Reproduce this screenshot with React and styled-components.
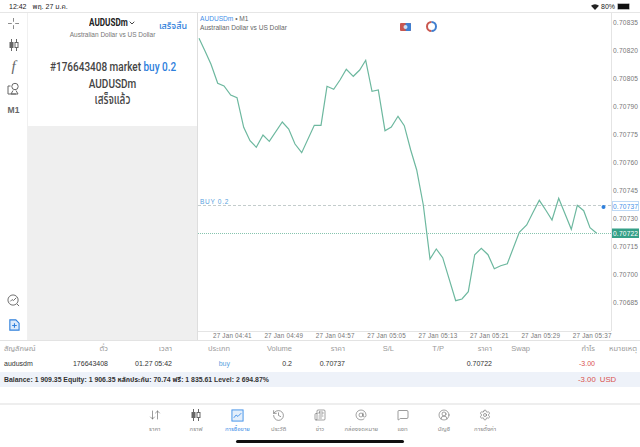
import React from "react";
import styled, { createGlobalStyle } from "styled-components";
import {
  ArrowDownUp,
  ChevronDown,
  CircleUserRound,
  AtSign,
  History,
  MessageSquare,
  Newspaper,
  Settings,
} from "lucide-react";

const THAI = `"Noto Sans Thai", "Noto Sans Thai UI", "Noto Sans", "DejaVu Sans"`;

const linePoints = [
  [199, 38.3], [205, 51], [211, 64.3], [217.7, 83.3], [224, 86], [230.7, 95], [237, 97.7],
  [243.7, 127.3], [250, 140.7], [256.3, 147.3], [263, 135], [269.3, 141.3], [282.3, 122],
  [288.7, 129], [295, 144], [301.7, 152.7], [314.3, 125.3], [321, 125.3], [327, 86.3],
  [333.7, 89.3], [340, 80], [346.3, 69.3], [353.3, 76.3], [359.7, 70], [365.7, 60.3],
  [372, 91.3], [378.3, 90], [385, 130.7], [391.3, 127], [398, 116.3], [404.3, 125.7],
  [410.7, 150], [416.7, 170], [423.3, 205], [430, 259], [436.3, 249], [442.7, 257.7],
  [455.7, 300.7], [462, 299], [468.3, 291.7], [474.7, 254.7], [481.3, 248.3], [488, 254.7],
  [494.3, 268.7], [500.7, 265.7], [507.3, 263.7], [519.3, 232.3], [526.7, 225], [532.7, 213],
  [539.3, 200.3], [545.7, 210], [552, 220], [558.7, 198.3], [571.3, 229.3], [577.3, 205.3],
  [583.7, 210.7], [590, 227.7], [596.7, 233.3],
];

const prices = [
  "0.70835", "0.70820", "0.70805", "0.70790", "0.70775", "0.70760",
  "0.70745", "0.70730", "0.70715", "0.70700", "0.70685",
];
const times = ["04:41", "04:49", "04:57", "05:05", "05:13", "05:21", "05:29", "05:37"];

const headers = [
  "สัญลักษณ์", "ตั๋ว", "เวลา", "ประเภท", "Volume", "ราคา",
  "S/L", "T/P", "ราคา", "Swap", "กำไร", "หมายเหตุ",
];
const values = [
  "audusdm", "176643408", "01.27 05:42", "buy", "0.2", "0.70737",
  "", "", "0.70722", "", "-3.00", "",
];

const GlobalStyle = createGlobalStyle`
  html, body {
    margin: 0;
    padding: 0;
    background: #fff;
  }
  body {
    font-family: "Liberation Sans", ${THAI}, sans-serif;
    overflow: hidden;
  }
`;

const Page = styled.div`
  width: 640px;
  height: 447px;
  display: flex;
  flex-direction: column;
  overflow: hidden;
`;

const StatusBar = styled.div`
  height: 13px;
  flex: none;
  display: flex;
  align-items: center;
  padding: 1px 9px 0 9px;
  box-sizing: border-box;
  font-size: 7px;
  color: #222;
  border-bottom: 1px solid #e6e6e6;
`;

const StatusDate = styled.span`
  margin-left: 6px;
  flex: 1;
`;

const BatteryLevel = styled.span`
  margin-left: 2px;
`;

const Battery = styled.span`
  display: inline-block;
  width: 11px;
  height: 5px;
  margin-left: 2px;
  margin-right: 1px;
  background: #111;
  border-radius: 1.5px;
  border: 1px solid #bbb;
`;

const Main = styled.div`
  height: 327px;
  flex: none;
  display: flex;
`;

const Toolbar = styled.div`
  width: 27px;
  flex: none;
  display: flex;
  flex-direction: column;
  align-items: center;
  box-sizing: border-box;
  color: #666;
`;

const ToolSlot = styled.div`
  height: 21.5px;
  width: 100%;
  display: flex;
  align-items: center;
  justify-content: center;
  color: ${(p) => p.$color || "#666"};
  font-size: ${(p) => p.$size || 8}px;
  font-weight: ${(p) => p.$weight || 400};
`;

const FuncGlyph = styled.span`
  font-family: "Liberation Serif", serif;
  font-style: italic;
  font-size: 15px;
  color: #666;
`;

const ToolSpacer = styled.div`
  flex: 1;
`;

const ToolBottom = styled.div`
  width: 100%;
  display: flex;
  flex-direction: column;
  gap: 3px;
  padding-bottom: 4px;
`;

const OrderPanel = styled.div`
  width: 171px;
  flex: none;
  display: flex;
  flex-direction: column;
  background: #efefef;
  border-left: 1px solid #f0f0f0;
  border-right: 1px solid #dedede;
  box-sizing: border-box;
`;

const OrderCard = styled.div`
  height: 113px;
  flex: none;
  background: #fff;
  display: flex;
  flex-direction: column;
  position: relative;
`;

const SymbolHead = styled.div`
  display: flex;
  flex-direction: column;
  align-items: center;
  padding-top: 3px;
`;

const SymbolName = styled.div`
  display: flex;
  align-items: center;
  gap: 1px;
  height: 13px;
  color: #222;
`;

const SymbolText = styled.span`
  display: inline-block;
  width: 38px;
  font-family: "Roboto", sans-serif;
  font-weight: 700;
  font-size: 11px;
  line-height: 13px;
  white-space: nowrap;
  transform: scaleX(0.74);
  transform-origin: left center;
`;

const SymbolDesc = styled.div`
  font-size: 6.5px;
  line-height: 9px;
  color: #777;
  margin-top: 1px;
`;

const DoneButton = styled.span`
  position: absolute;
  right: 10px;
  top: 6px;
  font-size: 9px;
  font-weight: 500;
  color: #2f80dc;
`;

const Message = styled.div`
  margin-top: 19px;
  text-align: center;
  white-space: nowrap;
  font-family: "Roboto", ${THAI}, sans-serif;
  font-size: 13.5px;
  line-height: 16.5px;
  color: #444;
  font-weight: 500;
  transform: scaleX(0.74);
`;

const BuyText = styled.span`
  color: #2f80dc;
`;

const ChartArea = styled.div`
  flex: 1;
  position: relative;
  min-width: 0;
`;

const ChartSvg = styled.svg`
  display: block;
  width: 100%;
  height: 100%;
`;

const Legend = styled.div`
  position: absolute;
  left: 2px;
  top: 2px;
  font-size: 6.6px;
  line-height: 8.5px;
  color: #666;
`;

const LegendSymbol = styled.span`
  color: #3f8fe8;
`;

const QuickIcons = styled.div`
  position: absolute;
  left: 202px;
  top: 8px;
  display: flex;
  gap: 15px;
  align-items: center;
`;

const Table = styled.div`
  flex: none;
  border-top: 1px solid #e3e3e3;
`;

const TableRow = styled.div`
  display: grid;
  grid-template-columns: 60px 48px 64px 58px 62px 53px 49px 50px 48px 38px 65px 42px;
  height: ${(p) => p.$height}px;
  align-items: center;
  font-size: ${(p) => (p.$head ? 7.5 : 7)}px;
  color: ${(p) => (p.$head ? "#9a9a9a" : "#333")};
`;

const Cell = styled.div`
  text-align: ${(p) => (p.$first ? "left" : "right")};
  padding-left: ${(p) => (p.$first ? 4 : 0)}px;
  white-space: nowrap;
  color: ${(p) => p.$color || "inherit"};
`;

const BalanceBar = styled.div`
  height: 15px;
  display: flex;
  align-items: center;
  background: #eef2f9;
  font-size: 6.9px;
  font-weight: 700;
  color: #333;
  padding-left: 4px;
`;

const BalanceText = styled.div`
  flex: 1;
  white-space: nowrap;
`;

const BalanceProfit = styled.div`
  width: 62px;
  display: flex;
  gap: 4px;
  font-weight: 400;
  font-size: 7.8px;
  color: #d9534f;
`;

const TabBar = styled.div`
  margin-top: 16px;
  flex: 1;
  border-top: 2px solid #eeeeee;
  display: flex;
  flex-direction: column;
  align-items: center;
  position: relative;
`;

const Tabs = styled.div`
  display: grid;
  grid-template-columns: repeat(9, 41.3px);
  padding-top: 2.5px;
`;

const Tab = styled.div`
  display: flex;
  flex-direction: column;
  align-items: center;
  gap: 2px;
  font-size: 6px;
  line-height: 8px;
  color: ${(p) => (p.$active ? "#3f8fe8" : "#8a8a8a")};
  white-space: nowrap;
`;

const TabIcon = styled.div`
  height: 15px;
  display: flex;
  align-items: center;
  justify-content: center;
  color: ${(p) => (p.$active ? "#3f8fe8" : "#666")};
`;

const HomeBar = styled.div`
  position: absolute;
  left: 236px;
  top: 35px;
  width: 168px;
  height: 2.5px;
  border-radius: 2px;
  background: #111;
`;

const WifiIcon = () => (
  <svg width="8" height="6" viewBox="0 0 16 12">
    <path d="M8 12 L0 3.5 A12 12 0 0 1 16 3.5 Z" fill="#222" />
  </svg>
);

const CrossIcon = () => (
  <svg width="11" height="11" viewBox="0 0 13 13" stroke="#777" strokeWidth="1" fill="none">
    <path d="M6.5 0v4.5M6.5 8.5V13M0 6.5h4.5M8.5 6.5H13" />
  </svg>
);

const CandleIcon = () => (
  <svg width="10" height="12" viewBox="0 0 10 12" stroke="#666" strokeWidth="1">
    <path d="M2.5 0V12M7.5 0V12" fill="none" />
    <rect x="1" y="3.5" width="3" height="5" fill="#666" />
    <rect x="6" y="3.5" width="3" height="5" fill="#fff" />
  </svg>
);

const ShapesIcon = () => (
  <svg width="13" height="13" viewBox="0 0 13 13" stroke="#666" strokeWidth="1" fill="none">
    <circle cx="8" cy="4.5" r="3.2" />
    <path d="M3.5 4H1v8h8M6 8.5l-2 3.5h7l-2-3.5" />
  </svg>
);

const SearchChartIcon = () => (
  <svg width="13" height="13" viewBox="0 0 14 14" stroke="#666" strokeWidth="1" fill="none">
    <circle cx="6.5" cy="6.5" r="5.5" />
    <path d="M3.5 8l2-2 1.5 1 3-3M10.7 10.7L13 13" />
  </svg>
);

const AddFileIcon = () => (
  <svg width="12" height="12" viewBox="0 0 13 13" fill="none">
    <path d="M2 1h6.5L12 4.5V12H2z" fill="#dcebfb" stroke="#2f80dc" strokeWidth="1.2" />
    <path d="M7 4.5v5M4.5 7h5" stroke="#2f80dc" strokeWidth="1.2" />
  </svg>
);

const TradeIcon = () => (
  <svg width="13" height="13" viewBox="0 0 14 14" fill="none">
    <rect x="1" y="1" width="12" height="12" fill="#e3eefb" stroke="#3f8fe8" />
    <path d="M3 9.5l2.5-3 2 1.5L11 4.5" stroke="#3f8fe8" />
  </svg>
);

const CameraBadge = () => (
  <svg width="11" height="8" viewBox="0 0 11 8">
    <rect width="11" height="8" rx="1" fill="#c9574f" />
    <rect x="5.5" width="5.5" height="8" rx="1" fill="#3f7fd0" />
    <circle cx="5.5" cy="4" r="2" fill="#cfe0f2" />
  </svg>
);

const RingBadge = () => (
  <svg width="11" height="11" viewBox="0 0 11 11" fill="none" strokeWidth="2">
    <path d="M5.5 1a4.5 4.5 0 0 0 0 9" stroke="#c9574f" />
    <path d="M5.5 1a4.5 4.5 0 0 1 0 9" stroke="#3f7fd0" />
  </svg>
);

const tabs = [
  { label: "ราคา", icon: <ArrowDownUp size={12} strokeWidth={1.3} /> },
  { label: "กราฟ", icon: <CandleIcon /> },
  { label: "การซื้อขาย", icon: <TradeIcon />, active: true },
  { label: "ประวัติ", icon: <History size={13} strokeWidth={1.2} /> },
  { label: "ข่าว", icon: <Newspaper size={12} strokeWidth={1.2} /> },
  { label: "กล่องจดหมาย", icon: <AtSign size={12} strokeWidth={1.2} /> },
  { label: "แชท", icon: <MessageSquare size={12} strokeWidth={1.3} /> },
  { label: "บัญชี", icon: <CircleUserRound size={12} strokeWidth={1.2} /> },
  { label: "การตั้งค่า", icon: <Settings size={12} strokeWidth={1.2} /> },
];

const Chart = () => (
  <ChartSvg viewBox="198 13 442 327">
    <path d="M611.5 13V331M198 331.5H611" stroke="#e4e4e4" fill="none" />
    <line x1="198" x2="611" y1="205.5" y2="205.5" stroke="#c3cccc" strokeDasharray="3 2" />
    <line x1="198" x2="611" y1="233.5" y2="233.5" stroke="#86c4ae" strokeDasharray="1 1" />
    <text x="200" y="204" fontSize="6.5" letterSpacing="0.7" fill="#5a9fe0">BUY 0.2</text>
    <polyline
      points={linePoints.map((p) => p.join(",")).join(" ")}
      fill="none"
      stroke="#6db89f"
      strokeWidth="1.2"
    />
    <circle cx="603.5" cy="207" r="2" fill="#2f80dc" />
    {prices.map((price, i) => (
      <text key={price} x="613" y={24.5 + i * 28} fontSize="6.6" letterSpacing="0.2" fill="#777">
        {price}
      </text>
    ))}
    <rect x="612.5" y="201.5" width="26" height="9" fill="#fff" stroke="#bcd8f5" />
    <text x="613" y="208.5" fontSize="6.6" letterSpacing="0.2" fill="#3f8fe8">0.70737</text>
    <rect x="612" y="228.5" width="27" height="9.5" fill="#35a088" />
    <text x="613" y="236" fontSize="6.6" letterSpacing="0.2" fill="#fff">0.70722</text>
    {times.map((time, i) => (
      <text key={time} x={213 + i * 51.4} y="338" fontSize="6.3" letterSpacing="0.2" fill="#777">
        27 Jan {time}
      </text>
    ))}
  </ChartSvg>
);

const App = () => (
  <Page>
    <GlobalStyle />
    <StatusBar>
      <span>12:42</span>
      <StatusDate>พฤ. 27 ม.ค.</StatusDate>
      <WifiIcon />
      <BatteryLevel>80%</BatteryLevel>
      <Battery />
    </StatusBar>
    <Main>
      <Toolbar>
        <ToolSlot><CrossIcon /></ToolSlot>
        <ToolSlot><CandleIcon /></ToolSlot>
        <ToolSlot><FuncGlyph>f</FuncGlyph></ToolSlot>
        <ToolSlot><ShapesIcon /></ToolSlot>
        <ToolSlot $size={8.5} $weight={700}>M1</ToolSlot>
        <ToolSpacer />
        <ToolBottom>
          <ToolSlot><SearchChartIcon /></ToolSlot>
          <ToolSlot $color="#2f80dc"><AddFileIcon /></ToolSlot>
        </ToolBottom>
      </Toolbar>
      <OrderPanel>
        <OrderCard>
          <SymbolHead>
            <SymbolName>
              <SymbolText>AUDUSDm</SymbolText>
              <ChevronDown size={8} strokeWidth={2.5} />
            </SymbolName>
            <SymbolDesc>Australian Dollar vs US Dollar</SymbolDesc>
          </SymbolHead>
          <DoneButton>เสร็จสิ้น</DoneButton>
          <Message>
            #176643408 market <BuyText>buy 0.2</BuyText>
            <br />
            AUDUSDm
            <br />
            เสร็จแล้ว
          </Message>
        </OrderCard>
      </OrderPanel>
      <ChartArea>
        <Chart />
        <Legend>
          <LegendSymbol>AUDUSDm</LegendSymbol> • M1
          <br />
          Australian Dollar vs US Dollar
        </Legend>
        <QuickIcons>
          <CameraBadge />
          <RingBadge />
        </QuickIcons>
      </ChartArea>
    </Main>
    <Table>
      <TableRow $head $height={14}>
        {headers.map((h, i) => (
          <Cell key={i} $first={i === 0}>{h}</Cell>
        ))}
      </TableRow>
      <TableRow $height={17}>
        {values.map((v, i) => (
          <Cell
            key={i}
            $first={i === 0}
            $color={v === "buy" ? "#5a9fe0" : v === "-3.00" ? "#d9534f" : undefined}
          >
            {v}
          </Cell>
        ))}
      </TableRow>
      <BalanceBar>
        <BalanceText>
          Balance: 1 909.35 Equity: 1 906.35 หลักประกัน: 70.74 ฟรี: 1 835.61 Level: 2 694.87%
        </BalanceText>
        <BalanceProfit>
          <span>-3.00</span>
          <span>USD</span>
        </BalanceProfit>
      </BalanceBar>
    </Table>
    <TabBar>
      <Tabs>
        {tabs.map((t) => (
          <Tab key={t.label} $active={t.active}>
            <TabIcon $active={t.active}>{t.icon}</TabIcon>
            {t.label}
          </Tab>
        ))}
      </Tabs>
      <HomeBar />
    </TabBar>
  </Page>
);

export default App;
